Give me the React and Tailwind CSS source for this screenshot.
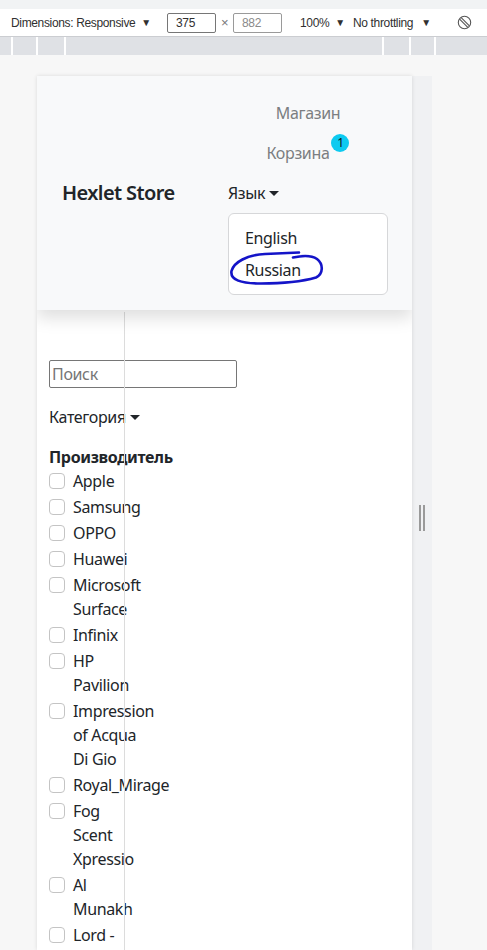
import React from 'react';

const brands = [
    ['Apple'],
    ['Samsung'],
    ['OPPO'],
    ['Huawei'],
    ['Microsoft', 'Surface'],
    ['Infinix'],
    ['HP', 'Pavilion'],
    ['Impression', 'of Acqua', 'Di Gio'],
    ['Royal_Mirage'],
    ['Fog', 'Scent', 'Xpressio'],
    ['Al', 'Munakh'],
    ['Lord -'],
];

const Caret = () => (
    <span className="inline-block ml-[4px] w-0 h-0 border-t-[5px] border-t-[#212529] border-x-[5px] border-x-transparent" />
);

const RotateIcon = () => (
    <svg width="15" height="15" viewBox="0 0 15 15" fill="none" stroke="#555" strokeWidth="1.1">
        <circle cx="7.5" cy="7.5" r="6.2" />
        <line x1="4.2" y1="2.6" x2="12.4" y2="10.8" />
        <line x1="2.6" y1="4.2" x2="10.8" y2="12.4" />
    </svg>
);

const Toolbar = () => (
    <div className="text-[12px] text-[#303030]" style={{ fontFamily: '"Liberation Sans", Arial, sans-serif' }}>
        <div className="h-[9px] bg-[#f1f3f4]" />
        <div className="h-[28px] bg-white border-b border-[#cbcdd1] flex items-center">
            <div className="w-[167px] pl-[11px] flex items-center">
                <span>Dimensions: Responsive</span>
                <span className="ml-[6px] text-[10px]">▼</span>
            </div>
            <div className="w-[49px] h-[20px] border border-[#767676] rounded-[2px] pl-[8px] flex items-center">375</div>
            <div className="w-[17px] text-center text-[#777] text-[13px]">×</div>
            <div className="w-[49px] h-[20px] border border-[#9a9a9a] rounded-[2px] pl-[8px] flex items-center text-[#8a8a8a]">882</div>
            <div className="w-[71px] pl-[18px] flex items-center">
                <span>100%</span>
                <span className="ml-[6px] text-[10px]">▼</span>
            </div>
            <div className="w-[104px] flex items-center">
                <span>No throttling</span>
                <span className="ml-[8px] text-[10px]">▼</span>
            </div>
            <RotateIcon />
        </div>
        <div className="h-[18px] bg-[#dfe1e5] flex">
            <div className="w-[13px] border-r-2 border-white" />
            <div className="w-[25px] border-r-2 border-white" />
            <div className="w-[28px] border-r-2 border-white" />
            <div className="w-[318px] border-r-2 border-white" />
            <div className="w-[27px] border-r-2 border-white" />
            <div className="w-[25px] border-r-2 border-white" />
            <div className="flex-1" />
        </div>
    </div>
);

const Navbar = () => (
    <nav className="h-[234px] bg-[#f8f9fa] shadow-[0_8px_16px_rgba(0,0,0,0.13)] flex items-center relative z-10">
        <div className="w-[191px] pl-[25px] text-[20px] font-semibold tracking-[-0.6px] text-[#212529]">Hexlet Store</div>
        <div className="w-[160px] pt-[17px] pb-[16px] self-start">
            <div className="py-2 text-center text-[#7b7e81]">Магазин</div>
            <div className="py-2 flex justify-center items-center text-[#7b7e81]">
                <span>Корзина</span>
                <span className="relative -top-[10px] ml-[2px] w-[18px] h-[18px] rounded-full bg-[#0dcaf0] text-[12px] text-[#111] flex items-center justify-center">1</span>
            </div>
            <div className="py-2 flex items-center text-[#212529]">
                <span>Язык</span>
                <Caret />
            </div>
            <div className="relative bg-white border border-[#d6d7d9] rounded-[6px] py-2">
                <div className="px-4 py-1 text-[#212529]">English</div>
                <div className="px-4 py-1 text-[#212529]">Russian</div>
                <svg className="absolute left-0 top-0 overflow-visible pointer-events-none" width="160" height="81" fill="none">
                    <path
                        d="M 70 38.5 L 36 40 C 18 41 5 48 2.5 57 C 1 66 12 69.5 32 69.5 C 52 69.5 73 67.5 87 63.5 C 94.5 60 94.5 50 88 45 C 83 41.5 73 41.5 64 43.5"
                        stroke="#1414c8"
                        strokeWidth="2.6"
                        strokeLinecap="round"
                        strokeLinejoin="round"
                    />
                </svg>
            </div>
        </div>
    </nav>
);

const Filters = () => (
    <div className="px-3 pt-[50px] text-[#212529]">
        <div className="w-[188px] h-[28px] border border-[#767676] rounded-[2px] px-[2px] flex items-center text-[#757575]">Поиск</div>
        <div className="mt-[17px] flex items-center">
            <span>Категория</span>
            <Caret />
        </div>
        <div className="mt-[16px] font-bold">Производитель</div>
        <div>
            {brands.map((lines) => (
                <div key={lines[0]} className="flex gap-2 mb-[2px]">
                    <span className="mt-[4px] w-4 h-4 shrink-0 bg-white border border-[#c4c4c4] rounded-[4px]" />
                    <div>
                        {lines.map((l) => (
                            <div key={l} className="whitespace-nowrap">{l}</div>
                        ))}
                    </div>
                </div>
            ))}
        </div>
    </div>
);

export default function App() {
    return (
        <div
            className="w-[487px] h-[950px] overflow-hidden bg-[#f7f7f7] text-[16px] leading-6 tracking-[-0.35px]"
            style={{ fontFamily: '"Segoe UI", "Noto Sans", "Open Sans", sans-serif' }}
        >
            <Toolbar />
            <div className="flex pt-[21px] pl-[37px] h-[895px]">
                <div className="relative w-[375px] h-full bg-white overflow-hidden shadow-[0_0_4px_rgba(0,0,0,0.12)]">
                    <Navbar />
                    <Filters />
                    <div className="absolute left-[87px] top-[236px] bottom-0 w-px bg-[#dcdcdc]" />
                </div>
                <div className="w-[20px] h-full bg-[#f0f1f3] flex items-start justify-center gap-[2px] pt-[429px]">
                    <span className="w-[2px] h-[26px] bg-[#9a9a9a]" />
                    <span className="w-[2px] h-[26px] bg-[#9a9a9a]" />
                </div>
            </div>
        </div>
    );
}
